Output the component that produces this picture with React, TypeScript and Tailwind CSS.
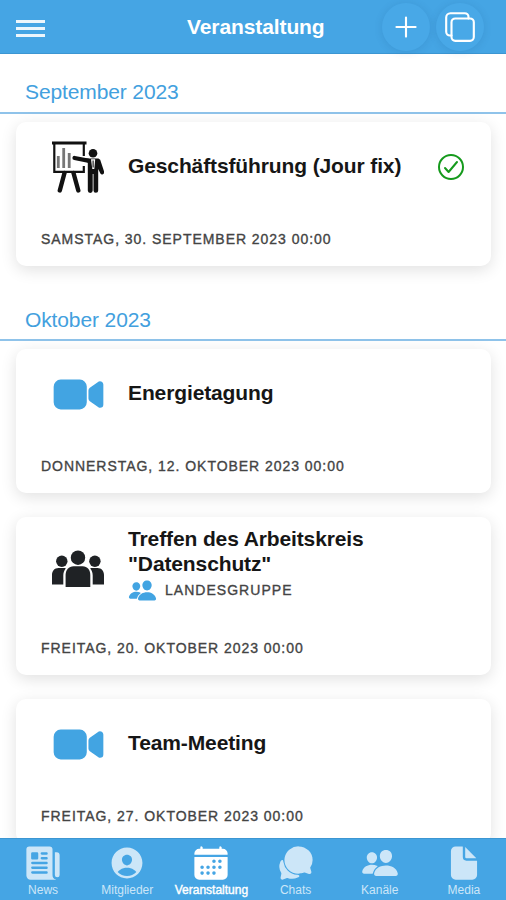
import React from 'react'
import { clsx } from 'clsx'
import type { IconType } from 'react-icons'
import {
  IoAdd,
  IoCalendar,
  IoChatbubbles,
  IoCheckmarkCircleOutline,
  IoCopyOutline,
  IoDocument,
  IoNewspaper,
  IoPeople,
  IoPersonCircle,
  IoVideocam
} from 'react-icons/io5'

type EventKind = 'presentation' | 'video' | 'group'

interface EventItem {
  kind: EventKind
  title: string
  date: string
  group?: string
  accepted?: boolean
}

interface Month {
  label: string
  events: EventItem[]
}

const months: Month[] = [
  {
    label: 'September 2023',
    events: [
      {
        kind: 'presentation',
        title: 'Geschäftsführung (Jour fix)',
        date: 'Samstag, 30. September 2023 00:00',
        accepted: true
      }
    ]
  },
  {
    label: 'Oktober 2023',
    events: [
      { kind: 'video', title: 'Energietagung', date: 'Donnerstag, 12. Oktober 2023 00:00' },
      {
        kind: 'group',
        title: 'Treffen des Arbeitskreis "Datenschutz"',
        date: 'Freitag, 20. Oktober 2023 00:00',
        group: 'Landesgruppe'
      },
      { kind: 'video', title: 'Team-Meeting', date: 'Freitag, 27. Oktober 2023 00:00' }
    ]
  }
]

const tabs: { label: string; icon: IconType; active?: boolean }[] = [
  { label: 'News', icon: IoNewspaper },
  { label: 'Mitglieder', icon: IoPersonCircle },
  { label: 'Veranstaltung', icon: IoCalendar, active: true },
  { label: 'Chats', icon: IoChatbubbles },
  { label: 'Kanäle', icon: IoPeople },
  { label: 'Media', icon: IoDocument }
]

function PresentationIcon() {
  return (
    <svg viewBox="0 0 52 52" className="h-[52px] w-[52px]" fill="none" stroke="#111">
      {/* Board */}
      <path d="M0 2h34.5" strokeWidth="3" />
      <path d="M2.3 3v27.8h29.5V25M31.8 3v12" strokeWidth="2.2" />
      {/* Bars */}
      <path d="M6.3 15v12M11.7 7v20M17.2 12v15" stroke="#777" strokeWidth="2.8" />
      {/* Legs */}
      <path d="M12.5 32L7.8 49.5M21.5 32l4.8 17.5" strokeWidth="4.4" strokeLinecap="round" />
      {/* Speaker */}
      <circle cx="41" cy="12.3" r="4.3" fill="#111" stroke="none" />
      <path d="M22.5 17l13.5 2.6" strokeWidth="4.2" strokeLinecap="round" />
      <path d="M34 17.4h12.4l1.8 1.4 4 12a2.1 2.1 0 0 1-3.8 1.6L46.2 28v21.5a2.3 2.3 0 0 1-4.7 0V33h-.8v16.5a2.3 2.3 0 0 1-4.9 0V22z" fill="#111" stroke="none" />
      <path d="M39 18.2h4.2L42.3 28h-2z" fill="#fff" stroke="none" />
      <path d="M41.1 19.5v7" strokeWidth="1.1" />
    </svg>
  )
}

function GroupIcon() {
  return (
    <svg viewBox="0 0 52 38" className="h-[38px] w-[52px]" fill="#1f2225">
      <circle cx="26" cy="7.7" r="7.2" />
      <circle cx="9.8" cy="11.2" r="5.7" />
      <circle cx="42.9" cy="11.2" r="5.7" />
      <path d="M0 34.5V25c0-4.2 2.6-7 6.5-7H12c.8 0 1.3.2 1.8.4-1.7 2-2.5 4.3-2.5 7.1v9zM52 34.5V25c0-4.2-2.6-7-6.5-7H40c-.8 0-1.3.2-1.8.4 1.7 2 2.5 4.3 2.5 7.1v9z" />
      <path d="M13.6 37V25c0-5.2 3.2-8.8 8-8.8h9c4.8 0 7.7 3.6 7.7 8.8v12z" />
    </svg>
  )
}

function EventIcon({ kind }: { kind: EventKind }) {
  if (kind === 'presentation') return <PresentationIcon />
  if (kind === 'group') return <GroupIcon />
  return <IoVideocam className="h-[53px] w-[53px] shrink-0 text-[#42a4e2]" />
}

function EventCard({ event }: { event: EventItem }) {
  return (
    <article
      className={clsx(
        'mx-4 mb-6 flex w-[475px] flex-col rounded-[10px] bg-white pr-6 pl-[25px] shadow-[0_4px_16px_rgba(0,0,0,0.12)]',
        event.group ? 'h-[158px]' : 'h-36'
      )}
    >
      <div className={clsx('flex items-center', event.group ? 'h-[104px]' : 'h-[90px]')}>
        <div className="flex w-[74px] shrink-0 justify-center">
          <EventIcon kind={event.kind} />
        </div>
        <div className={clsx('ml-[13px] flex-1', event.group ? 'pb-[6px]' : 'pb-[2px]')}>
          <h2 className="max-w-[290px] text-[21px] leading-[24.5px] font-bold tracking-[-0.12px] text-[#161616]">{event.title}</h2>
          {event.group && (
            <div className="flex items-center gap-2 text-[14px] leading-[29px] tracking-[1.03px] text-[#444] uppercase [-webkit-text-stroke:0.35px_#444]">
              <IoPeople className="h-[29px] w-[29px] text-[#42a4e2] [-webkit-text-stroke:0]" />
              {event.group}
            </div>
          )}
        </div>
        {event.accepted && <IoCheckmarkCircleOutline className="h-8 w-8 shrink-0 text-[#159a1c]" />}
      </div>
      <p className="mt-auto mb-[17px] text-[14px] leading-5 tracking-[0.96px] text-[#444] uppercase [-webkit-text-stroke:0.35px_#444]">
        {event.date}
      </p>
    </article>
  )
}

function Header() {
  return (
    <header className="flex h-[54px] shrink-0 items-center border-b border-[#3c96d2] bg-[#45a5e4] text-white">
      <button type="button" aria-label="Menü" className="mt-[3px] ml-4 flex w-[29px] flex-col gap-1">
        <span className="h-[3px] bg-white/90" />
        <span className="h-[3px] bg-white/90" />
        <span className="h-[3px] bg-white/90" />
      </button>
      <h1 className="ml-[142px] w-[195px] text-[21px] leading-6 font-bold tracking-[-0.1px]">Veranstaltung</h1>
      <div className="flex gap-[6px]">
        <button type="button" aria-label="Neu" className="flex h-12 w-12 items-center justify-center rounded-full bg-[#48a8e7] shadow-[0_1px_8px_rgba(0,60,110,0.12)]">
          <IoAdd className="mt-px h-[34px] w-[34px]" />
        </button>
        <button type="button" aria-label="Kopieren" className="flex h-12 w-12 items-center justify-center rounded-full bg-[#48a8e7] shadow-[0_1px_8px_rgba(0,60,110,0.12)]">
          <IoCopyOutline className="mt-px h-[34px] w-[34px]" />
        </button>
      </div>
    </header>
  )
}

function TabBar() {
  return (
    <nav className="grid h-[62px] shrink-0 grid-cols-6 border-t border-[#3c96d2] bg-[#45a5e4] pl-px">
      {tabs.map(({ label, icon: Icon, active }) => (
        <button
          key={label}
          type="button"
          className={clsx('flex flex-col items-center pt-[5px]', active ? 'text-white' : 'text-[#cce6f8]')}
        >
          <Icon className="h-[38px] w-[38px]" />
          <span className={clsx('text-[12px] leading-4', active && '[-webkit-text-stroke:0.4px_white]')}>{label}</span>
        </button>
      ))}
    </nav>
  )
}

export default function App() {
  return (
    <div className="flex h-[900px] w-[506px] flex-col overflow-hidden bg-white font-['Liberation_Sans',Arial,sans-serif]">
      <Header />
      <main className="min-h-0 flex-1 overflow-hidden">
        {months.map((month, i) => (
          <section key={month.label}>
            <div className={clsx('mb-2 flex h-[60px] border-b-2 border-[#8fc3ea] pl-[25px]', i > 0 ? '-mt-[9px] pt-[27px]' : 'pt-[26px]')}>
              <h2 className="text-[21px] leading-6 tracking-[-0.12px] text-[#42a0de]">{month.label}</h2>
            </div>
            {month.events.map((event) => (
              <EventCard key={event.date} event={event} />
            ))}
          </section>
        ))}
      </main>
      <TabBar />
    </div>
  )
}
